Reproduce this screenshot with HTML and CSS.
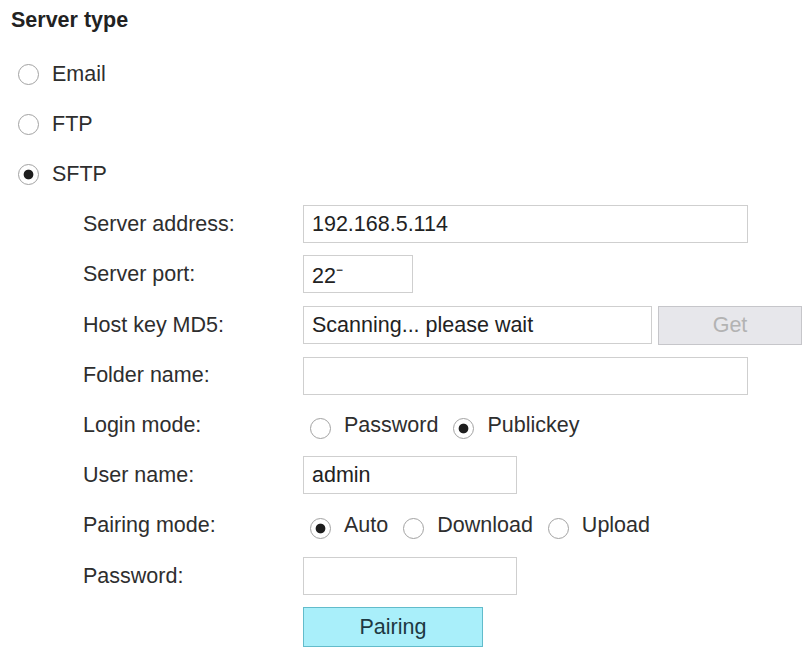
FILE: index.html
```html
<!DOCTYPE html>
<html lang="en">
<head>
<meta charset="utf-8">
<title>Server type</title>
<link rel="stylesheet" href="styles.css">
</head>
<body>
<div class="page">
  <h2 class="title">Server type</h2>
  <div class="types">
    <label class="type"><input type="radio" name="stype" class="radio">Email</label>
    <label class="type"><input type="radio" name="stype" class="radio">FTP</label>
    <label class="type"><input type="radio" name="stype" class="radio" checked>SFTP</label>
  </div>
  <div class="form">
    <div class="label">Server address:</div>
    <div class="cell"><input class="field w-long" type="text" value="192.168.5.114"></div>

    <div class="label">Server port:</div>
    <div class="cell"><input class="field w-port" type="text" value="22⁻"></div>

    <div class="label">Host key MD5:</div>
    <div class="cell"><input class="field w-key" type="text" value="Scanning... please wait"><button class="get" type="button">Get</button></div>

    <div class="label">Folder name:</div>
    <div class="cell"><input class="field w-long" type="text" value=""></div>

    <div class="label">Login mode:</div>
    <div class="cell opts">
      <label class="opt"><input type="radio" name="login" class="radio low">Password</label>
      <label class="opt"><input type="radio" name="login" class="radio low" checked>Publickey</label>
    </div>

    <div class="label">User name:</div>
    <div class="cell"><input class="field w-short" type="text" value="admin"></div>

    <div class="label">Pairing mode:</div>
    <div class="cell opts">
      <label class="opt"><input type="radio" name="pair" class="radio low" checked>Auto</label>
      <label class="opt"><input type="radio" name="pair" class="radio low">Download</label>
      <label class="opt"><input type="radio" name="pair" class="radio low">Upload</label>
    </div>

    <div class="label">Password:</div>
    <div class="cell"><input class="field w-short" type="password" value=""></div>

    <div class="label"></div>
    <div class="cell"><button class="pairing" type="button">Pairing</button></div>
  </div>
</div>
</body>
</html>
```

FILE: styles.css
```css
html, body {
  margin: 0;
  padding: 0;
  background: #ffffff;
}

body {
  font-family: "Liberation Sans", Arial, sans-serif;
  font-size: 21.5px;
  color: #2e2e2e;
}

.page {
  padding-top: 8px;
}

.title {
  margin: 0 0 0 11px;
  font-size: 21.5px;
  line-height: 24px;
  font-weight: bold;
  color: #222222;
}

.types {
  margin-top: 17px;
  display: flex;
  flex-direction: column;
}

.type {
  height: 50px;
  display: flex;
  align-items: center;
  padding-left: 18px;
}

.radio {
  appearance: none;
  -webkit-appearance: none;
  width: 21px;
  height: 21px;
  margin: 0 13px 0 0;
  border: 1.6px solid #a2a2a2;
  border-radius: 50%;
  background: #ffffff;
  box-sizing: border-box;
  flex: none;
}

.radio:checked {
  background: radial-gradient(circle, #1e1e1e 0, #1e1e1e 4.4px, #ffffff 5.3px);
}

.radio.low {
  margin-top: 6px;
}

.form {
  margin-left: 83px;
  display: grid;
  grid-template-columns: 220px 1fr;
  grid-template-rows: 50px 50px 52px 49px 50px 50px 50px 52px 50px;
  align-items: center;
}

.label {
  color: #2e2e2e;
}

.cell {
  display: flex;
  align-items: center;
}

.field {
  box-sizing: border-box;
  height: 38px;
  margin: 0;
  padding: 0 8px;
  border: 1.6px solid #cfcfcf;
  border-radius: 0;
  background: #ffffff;
  font-family: "Liberation Sans", Arial, sans-serif;
  font-size: 21.5px;
  color: #222222;
  outline: none;
}

.w-long { width: 445px; }
.w-port { width: 110px; }
.w-key { width: 349px; }
.w-short { width: 214px; }

.get {
  box-sizing: border-box;
  width: 144px;
  height: 39px;
  margin-left: 6px;
  border: 1.6px solid #c6c6ca;
  background: #e7e7eb;
  color: #b3b3b3;
  font-family: "Liberation Sans", Arial, sans-serif;
  font-size: 21.5px;
}

.opts {
  padding-left: 7px;
  gap: 15px;
}

.opt {
  display: flex;
  align-items: center;
}

.pairing {
  box-sizing: border-box;
  width: 180px;
  height: 40px;
  border: 1.6px solid #62bccb;
  background: #a9effa;
  color: #1d3942;
  font-family: "Liberation Sans", Arial, sans-serif;
  font-size: 21.5px;
}
```
